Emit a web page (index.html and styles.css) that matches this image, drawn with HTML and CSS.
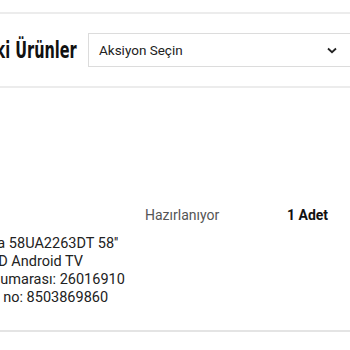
FILE: index.html
```html
<!DOCTYPE html>
<html lang="tr">
<head>
    <meta charset="UTF-8">
    <meta name="viewport" content="width=device-width, initial-scale=1.0">
    <title>Siparişteki Ürünler</title>
    <link rel="stylesheet" href="styles.css">
</head>
<body>
    <div class="page">
        <div class="header">
            <h2 class="title"><span>Siparişteki Ürünler</span></h2>
            <div class="select">
                <span>Aksiyon Seçin</span>
                <svg class="chevron" width="10" height="7" viewBox="0 0 10 7">
                    <path d="M1 1.5 L5 5.2 L9 1.5" fill="none" stroke="#222" stroke-width="1.8"/>
                </svg>
            </div>
        </div>

        <div class="item">
            <div class="product">
                Toshiba 58UA2263DT 58''<br>
                Ultra HD Android TV<br>
                Takip numarası: 26016910<br>
                Barkod no: 8503869860
            </div>
            <div class="status">Hazırlanıyor</div>
            <div class="qty">1 Adet</div>
        </div>
    </div>
</body>
</html>
```

FILE: styles.css
```css
body {
    margin: 0;
    padding-top: 12px;
    background: #fff;
    font-family: Roboto, 'Noto Sans', sans-serif;
    color: #222;
    overflow: hidden;
}
.page {
    margin-left: -220px;
    width: 600px;
    border-top: 2px solid #ececec;
}
.header {
    display: grid;
    grid-template-columns: 297px 270px;
    column-gap: 11px;
    align-items: center;
    padding: 19px 0;
    border-bottom: 2px solid #ececec;
}
.title {
    margin: 0;
    text-align: right;
    font-family: 'DejaVu Sans', sans-serif;
    font-size: 23px;
    font-weight: bold;
    color: #111;
}
.title span {
    display: inline-block;
    transform: scaleX(0.63);
    transform-origin: right center;
}
.select {
    display: flex;
    align-items: center;
    justify-content: space-between;
    height: 32px;
    padding: 0 20px 0 10px;
    border: 1px solid #dcdcdc;
    font-size: 13.5px;
}
.item {
    display: grid;
    grid-template-columns: 365px 142px auto;
    padding: 117px 0 23px;
    border-bottom: 2px solid #e4e4e4;
}
.product {
    padding: 30px 0 0 174px;
    font-size: 14.5px;
    line-height: 18px;
    white-space: nowrap;
}
.status {
    font-size: 14px;
    line-height: 20px;
    color: #555;
}
.qty {
    font-size: 14px;
    line-height: 20px;
    font-weight: bold;
    color: #111;
}
```
